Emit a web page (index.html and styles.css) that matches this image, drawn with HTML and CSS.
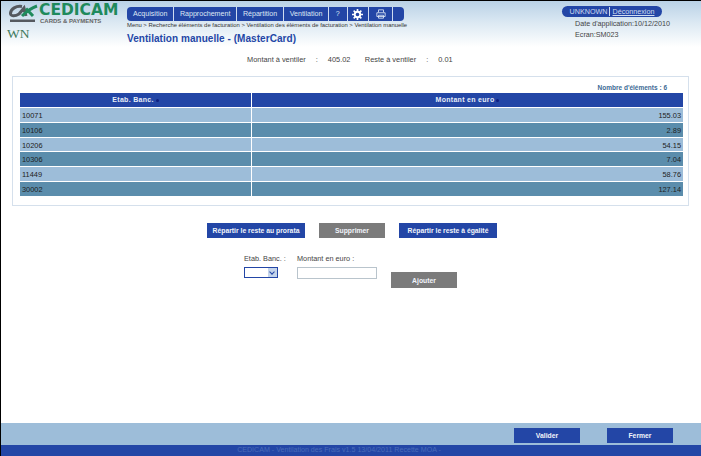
FILE: index.html
```html
<!DOCTYPE html>
<html lang="fr">
<head>
  <meta charset="UTF-8">
  <title>Ventilation manuelle</title>
  <link rel="stylesheet" href="styles.css">
</head>
<body>
  <div class="page">
    <header class="top">
      <div class="brand">
        <div class="logo">
          <svg class="logo-mark" viewBox="0 0 29 19" width="29" height="19">
            <path d="M13 2.5 C7 1.5 2 5 1.5 9 C1.2 12.5 6 12.5 10 10 L15 4 L17 12" fill="none" stroke="#55595f" stroke-width="3"/>
            <path d="M13 12 C17 8 22 4 28 2 M17 4.5 L24 12" fill="none" stroke="#1f8a5c" stroke-width="3"/>
            <rect x="1" y="15.5" width="25" height="2.5" fill="#55595f"/>
          </svg>
          <div class="logo-text">
            <div class="logo-name">CEDICAM</div>
            <div class="logo-sub">CARDS &amp; PAYMENTS</div>
          </div>
        </div>
        <div class="wn">WN</div>
      </div>

      <div class="head-mid">
        <nav class="menu">
          <a class="menu-item w47">Acquisition</a>
          <a class="menu-item w62">Rapprochement</a>
          <a class="menu-item w47">Répartition</a>
          <a class="menu-item w44">Ventilation</a>
          <a class="menu-item w19">?</a>
          <a class="menu-item w22">
            <svg viewBox="0 0 12 12" width="11" height="11">
              <circle cx="6" cy="6" r="3" fill="none" stroke="#fff" stroke-width="2"/>
              <path d="M6 0V3M6 9V12M0 6H3M9 6H12M1.8 1.8L3.8 3.8M8.2 8.2L10.2 10.2M1.8 10.2L3.8 8.2M8.2 3.8L10.2 1.8" stroke="#fff" stroke-width="1.8"/>
            </svg>
          </a>
          <a class="menu-item w24">
            <svg viewBox="0 0 12 12" width="10" height="10">
              <path d="M3 4V1H9V4M1 4.5H11V9H1ZM3 7.5H9V11H3Z" fill="none" stroke="#dfe8f5" stroke-width="1"/>
            </svg>
          </a>
          <a class="menu-item w11"></a>
        </nav>
        <div class="crumbs">Menu &gt; Recherche éléments de facturation &gt; Ventilation des éléments de facturation &gt; Ventilation manuelle</div>
        <h1 class="title">Ventilation manuelle - (MasterCard)</h1>
      </div>

      <div class="user">
        <div class="user-pill"><span class="user-name">UNKNOWN</span><a class="logout">Déconnexion</a></div>
        <div class="user-line">Date d'application:10/12/2010</div>
        <div class="user-line">Ecran:SM023</div>
      </div>
    </header>

    <main class="content">
      <div class="amounts">
        <span class="amt-label">Montant à ventiler</span><span class="amt-sep">:</span><span class="amt-val">405.02</span>
        <span class="amt-label">Reste à ventiler</span><span class="amt-sep">:</span><span class="amt-val">0.01</span>
      </div>

      <section class="panel">
        <div class="count">Nombre d'éléments : 6</div>
        <div class="grid">
          <div class="th">Etab. Banc.<i class="sort"></i></div>
          <div class="th">Montant en euro<i class="sort"></i></div>

          <div class="td light">10071</div><div class="td light num">155.03</div>
          <div class="td dark">10106</div><div class="td dark num">2.89</div>
          <div class="td light">10206</div><div class="td light num">54.15</div>
          <div class="td dark">10306</div><div class="td dark num">7.04</div>
          <div class="td light">11449</div><div class="td light num">58.76</div>
          <div class="td dark">30002</div><div class="td dark num">127.14</div>
        </div>
      </section>

      <div class="actions">
        <button class="btn blue wide">Répartir le reste au prorata</button>
        <button class="btn grey">Supprimer</button>
        <button class="btn blue wide">Répartir le reste à égalité</button>
      </div>

      <form class="add-form">
        <div class="field">
          <label class="field-label">Etab. Banc. :</label>
          <div class="fake-select"><span class="fake-arrow"></span></div>
        </div>
        <div class="field field-amount">
          <label class="field-label">Montant en euro :</label>
          <input class="field-input" type="text">
        </div>
        <button class="btn grey add-btn" type="button">Ajouter</button>
      </form>
    </main>

    <div class="foot-bar">
      <button class="btn blue">Valider</button>
      <button class="btn blue">Fermer</button>
    </div>
    <footer class="foot-line">CEDICAM - Ventilation des Frais v1.5 13/04/2011 Recette MOA -</footer>
  </div>
</body>
</html>
```

FILE: styles.css
```css
* {
  box-sizing: border-box;
}

html,
body {
  margin: 0;
  background: #000;
}

.page {
  width: 700px;
  height: 455px;
  margin: 1px 0 0 1px;
  display: flex;
  flex-direction: column;
  background: #fff;
  font-family: "Liberation Sans", Arial, sans-serif;
  font-size: 8px;
  color: #333;
  overflow: hidden;
}

/* header */
.top {
  height: 53px;
  display: flex;
  background: linear-gradient(#b9d1e6, #dce9f3 22px, #fff 46px);
}

.brand {
  width: 126px;
  padding: 3px 0 0 8px;
}

.logo {
  display: flex;
  gap: 1px;
}

.logo-mark {
  display: block;
  flex: none;
}

.logo-name {
  font-family: "DejaVu Sans", sans-serif;
  font-size: 15.5px;
  line-height: 12px;
  font-weight: bold;
  color: #1f8a5c;
}

.logo-sub {
  font-size: 6px;
  line-height: 7px;
  margin: 2px 0 0 1px;
  font-weight: bold;
  color: #666;
  white-space: nowrap;
}

.wn {
  font-family: "Liberation Serif", serif;
  font-size: 13.5px;
  line-height: 15px;
  color: #3f7a5c;
  margin: 1px 0 0 -2px;
}

.head-mid {
  width: 420px;
  padding-top: 6px;
}

.menu {
  display: flex;
  width: 277px;
  height: 14px;
  gap: 1px;
  background: #cfdcf0;
  border-radius: 4px;
  overflow: hidden;
}

.menu-item {
  display: flex;
  align-items: center;
  justify-content: center;
  background: #2346a6;
  color: #dfe8f5;
  font-size: 7.1px;
}

.w47 { width: 47px; }
.w62 { width: 62px; }
.w44 { width: 44px; }
.w19 { width: 18px; }
.w22 { width: 21px; }
.w24 { width: 23px; }
.w11 { width: 11px; }

.crumbs {
  font-size: 5.9px;
  line-height: 9px;
  white-space: nowrap;
  color: #333;
}

.title {
  margin: 2px 0 0;
  font-size: 10px;
  line-height: 13px;
  color: #2346a6;
  letter-spacing: 0.05px;
}

.user {
  padding: 5px 0 0 15px;
  font-size: 7.2px;
  color: #444;
}

.user-pill {
  display: flex;
  width: 100px;
  height: 11px;
  align-items: center;
  justify-content: center;
  background: #2346a6;
  border-radius: 6px;
  margin-bottom: 1px;
}

.user-name {
  color: #cfdcf0;
  padding-right: 2px;
  border-right: 1px solid #cfdcf0;
}

.logout {
  color: #cfdcf0;
  padding-left: 2px;
  text-decoration: underline;
}

.user-line {
  padding-left: 13px;
  line-height: 11px;
}

/* centre */
.content {
  flex: 1;
}

.amounts {
  display: flex;
  height: 22px;
  padding-left: 246px;
  line-height: 12px;
  font-size: 7.4px;
  color: #444;
}

.amt-sep {
  margin: 0 10px;
}

.amt-val {
  width: 37px;
}

.panel {
  width: 677px;
  height: 130px;
  margin-left: 11px;
  padding: 6px 5px 0 7px;
  border: 1px solid #d5e0ec;
}

.count {
  height: 9px;
  line-height: 9px;
  font-size: 6.5px;
  font-weight: bold;
  color: #3c6a94;
  text-align: right;
  padding-right: 16px;
  margin-bottom: 1px;
}

.grid {
  display: grid;
  grid-template-columns: 231px 431px;
  grid-template-rows: 14px;
  grid-auto-rows: 13.8px;
  row-gap: 1px;
  column-gap: 1px;
  width: 663px;
}

.th {
  background: #2346a6;
  color: #e8eef8;
  font-size: 7px;
  font-weight: bold;
  letter-spacing: 0.3px;
  line-height: 14px;
  text-align: center;
}

.sort {
  display: inline-block;
  width: 3px;
  height: 3px;
  margin-left: 2px;
  background: #0f1f80;
  border-radius: 50%;
}

.td {
  padding: 0 2px;
  line-height: 16px;
  font-size: 7.4px;
  color: #222;
}

.light {
  background: #9dbdd9;
}

.dark {
  background: #5b8dac;
}

.num {
  text-align: right;
}

.actions {
  display: flex;
  gap: 14px;
  margin: 17px 0 0 206px;
}

.btn {
  display: block;
  width: 66px;
  height: 15px;
  padding: 0;
  border: 0;
  color: #f1f4fa;
  font-family: "Liberation Sans", Arial, sans-serif;
  font-size: 6.8px;
  font-weight: bold;
}

.btn.blue {
  background: #2346a6;
}

.btn.grey {
  background: #7b7b7b;
}

.btn.wide {
  width: 98px;
}

.add-form {
  display: flex;
  margin: 16px 0 0 243px;
}

.field {
  width: 53px;
}

.field-amount {
  width: 94px;
}

.field-label {
  display: block;
  height: 13px;
  line-height: 10px;
  font-size: 7.3px;
  color: #444;
  white-space: nowrap;
}

.fake-select {
  width: 34px;
  height: 11px;
  background: #fff;
  border: 1px solid #2346a6;
}

.fake-arrow {
  display: block;
  width: 9px;
  height: 9px;
  margin-left: auto;
  background: #c4d4ea;
}

.fake-arrow::after {
  content: "";
  display: block;
  width: 3px;
  height: 3px;
  margin-left: 2px;
  border-right: 1px solid #2346a6;
  border-bottom: 1px solid #2346a6;
  transform: translateY(2px) rotate(45deg);
}

.field-input {
  display: block;
  width: 80px;
  height: 12px;
  padding: 0;
  border: 1px solid #b9c4cc;
  background: #fff;
}

.add-btn {
  height: 16px;
  margin-top: 18px;
}

/* bottom */
.foot-bar {
  height: 22px;
  display: flex;
  gap: 27px;
  justify-content: flex-end;
  padding: 5px 28px 0 0;
  background: #9dbdd9;
}

.foot-line {
  height: 11px;
  line-height: 11px;
  padding-right: 24px;
  background: #2346a6;
  color: #4a6cb8;
  font-size: 7.1px;
  text-align: center;
}
```
